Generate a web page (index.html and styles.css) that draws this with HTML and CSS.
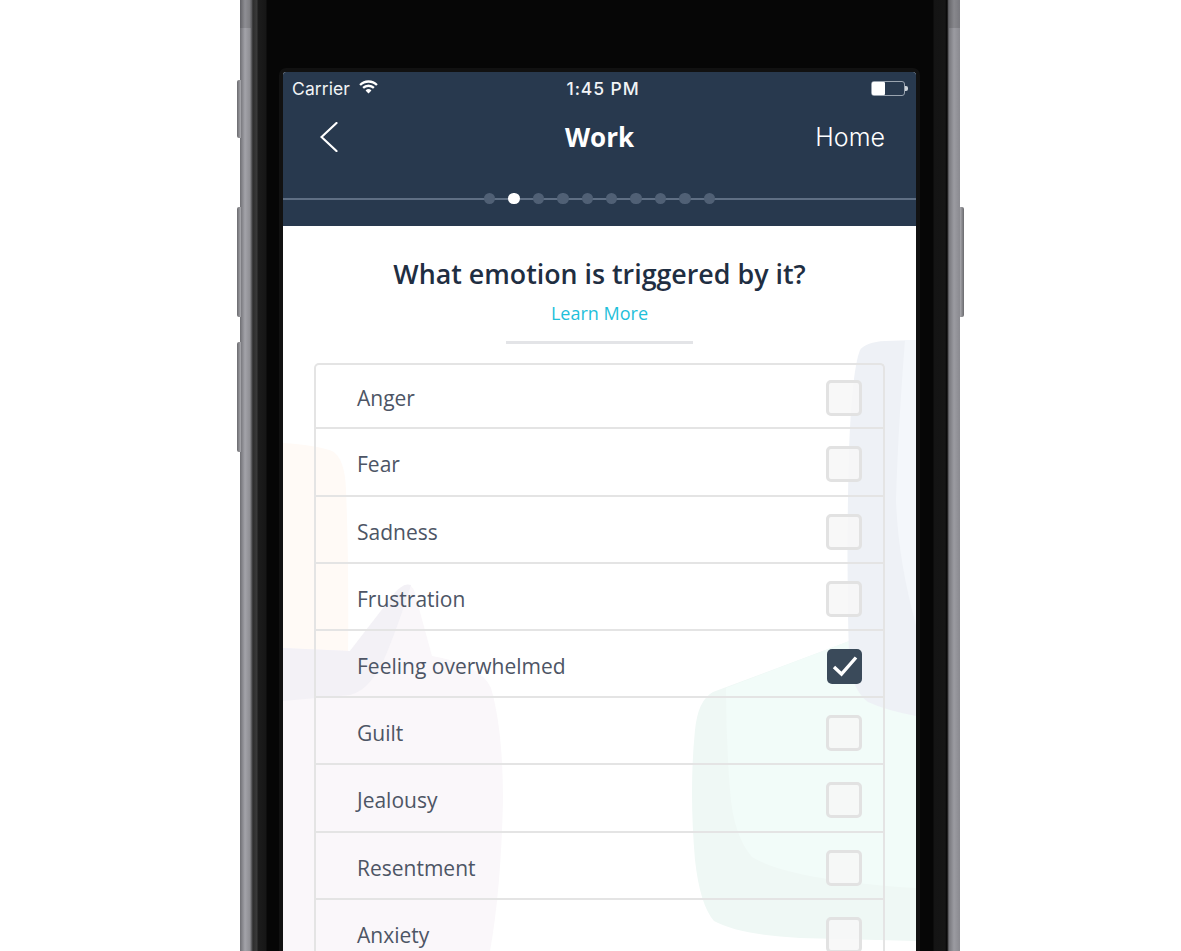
FILE: index.html
```html
<!DOCTYPE html>
<html lang="en">
<head>
    <meta charset="UTF-8">
    <meta name="viewport" content="width=device-width, initial-scale=1.0">
    <title>Work</title>
    <link rel="stylesheet" href="styles.css">
</head>
<body>
    <div class="stage">
        <div class="phone">
            <span class="side-btn mute"></span>
            <span class="side-btn vol-up"></span>
            <span class="side-btn vol-down"></span>
            <span class="side-btn power"></span>

            <div class="phone-body">
                <div class="screen">
                    <header class="header">
                        <div class="status-bar">
                            <div class="status-left">
                                <span>Carrier</span>
                                <svg class="wifi" viewBox="0 0 18 13" width="19" height="14">
                                    <path d="M1 4.6a11.4 11.4 0 0 1 16 0" />
                                    <path d="M3.9 7.4a7.3 7.3 0 0 1 10.2 0" />
                                    <path class="wifi-dot" d="M6.2 9.8a4 4 0 0 1 5.6 0L9 12.6z" />
                                </svg>
                            </div>
                            <span class="status-time">1:45 PM</span>
                            <div class="status-right">
                                <div class="battery"><div class="battery-level"></div></div>
                                <span class="battery-tip"></span>
                            </div>
                        </div>

                        <div class="nav">
                            <svg class="back" viewBox="0 0 18 30" width="18" height="30">
                                <path d="M16.5 1 L1.5 15 L16.5 29" />
                            </svg>
                            <h1 class="nav-title">Work</h1>
                            <span class="nav-home">Home</span>
                        </div>

                        <div class="progress">
                            <span class="dot"></span>
                            <span class="dot active"></span>
                            <span class="dot"></span>
                            <span class="dot"></span>
                            <span class="dot"></span>
                            <span class="dot"></span>
                            <span class="dot"></span>
                            <span class="dot"></span>
                            <span class="dot"></span>
                            <span class="dot"></span>
                        </div>
                    </header>

                    <main class="content">
                        <svg class="blobs" viewBox="283 226 633 725" width="633" height="725">
                            <path fill="#fffaf6" d="M283 443 Q315 445 332 451 Q345 458 346 490 Q349 560 348 660 L283 660 Z" />
                            <path fill="#faf7fa" d="M283 648 L350 651 L394 594 Q407 578 414 590 L432 656 Q480 664 491 688 Q503 730 503 800 Q501 890 490 951 L283 951 Z" />
                            <path fill="#f3f1f6" d="M283 648 L350 651 L394 594 Q404 582 411 585 Q400 620 388 650 Q372 690 350 695 L283 701 Z" />
                            <path fill="#eff8f5" d="M916 610 L852 640 L713 692 Q698 700 695 730 Q689 790 695 860 Q700 905 714 921 Q740 935 800 938 L916 941 Z" />
                            <path fill="#f2fcf9" d="M916 610 L852 640 L726 688 Q726 740 730 790 Q733 835 752 857 Q790 880 916 888 Z" />
                            <path fill="#eef1f6" d="M916 340 L885 341 Q866 342 860 350 Q852 370 849 450 Q846 560 849 660 Q852 690 868 702 Q885 710 916 716 Z" />
                            <path fill="#f4f7fb" d="M916 340 L905 340 Q898 430 896 500 Q898 560 916 625 Z" />
                        </svg>

                        <div class="question">
                            <h2 class="question-title">What emotion is triggered by it?</h2>
                            <a class="learn-more">Learn More</a>
                            <div class="rule"></div>
                        </div>

                        <ul class="list">
                            <li class="row"><span>Anger</span><span class="box"></span></li>
                            <li class="row"><span>Fear</span><span class="box"></span></li>
                            <li class="row"><span>Sadness</span><span class="box"></span></li>
                            <li class="row"><span>Frustration</span><span class="box"></span></li>
                            <li class="row">
                                <span>Feeling overwhelmed</span>
                                <span class="box checked">
                                    <svg viewBox="0 0 26 22" width="26" height="22">
                                        <path d="M2 12 L9.5 19 L24 2.5" />
                                    </svg>
                                </span>
                            </li>
                            <li class="row"><span>Guilt</span><span class="box"></span></li>
                            <li class="row"><span>Jealousy</span><span class="box"></span></li>
                            <li class="row"><span>Resentment</span><span class="box"></span></li>
                            <li class="row"><span>Anxiety</span><span class="box"></span></li>
                        </ul>
                    </main>
                </div>
            </div>
        </div>
    </div>
</body>
</html>
```

FILE: styles.css
```css
* {
    margin: 0;
    padding: 0;
    box-sizing: border-box;
}

body {
    background-color: #fff;
    font-family: "Open Sans", Lato, sans-serif;
    overflow: hidden;
}

.stage {
    height: 100vh;
    padding-left: 240px;
    overflow: hidden;
}

.phone {
    position: relative;
    width: 720px;
    height: 951px;
}

/* antenna bands at the top of the metal edge */
.phone::before,
.phone::after {
    content: "";
    position: absolute;
    top: 0;
    width: 11px;
    height: 28px;
    background-color: rgba(0, 0, 0, 0.12);
}

.phone::before { left: 0; }
.phone::after { right: 0; }

.phone-body {
    height: 100%;
    padding: 68px 44px 0 43px;
    background: linear-gradient(90deg,
        #6f6f74 0, #a3a3a9 5px, #8e8e93 10px, #4c4c4e 12px,
        #2e2e2e 13px, #3a3a3a 17px, #1c1c1c 18px, #161616 26px,
        #060606 27px, #060606 693px,
        #141414 694px, #161616 705px, #050505 707px,
        #77777c 709px, #9b9ba1 714px, #8a8a90 720px);
}

.screen {
    height: 100%;
    border: 4px solid #111;
    border-bottom: 0;
    border-radius: 7px 7px 0 0;
    background-color: #fff;
    display: flex;
    flex-direction: column;
    overflow: hidden;
    margin: 0 -4px;
}

.side-btn {
    position: absolute;
    width: 4px;
    background: linear-gradient(90deg, #6a6a6e, #a9a9ae);
    border-radius: 2px 0 0 2px;
}

.mute { left: -3px; top: 80px; height: 58px; }
.vol-up { left: -3px; top: 207px; height: 110px; }
.vol-down { left: -3px; top: 342px; height: 110px; }

.power {
    left: 720px;
    top: 207px;
    height: 110px;
    border-radius: 0 2px 2px 0;
    background: linear-gradient(90deg, #a9a9ae, #6a6a6e);
}

.header {
    height: 154px;
    flex-shrink: 0;
    background-color: #28394e;
    color: #fff;
    display: flex;
    flex-direction: column;
}

.status-bar {
    display: flex;
    justify-content: space-between;
    align-items: center;
    height: 33px;
    padding: 0 8px 0 9px;
    font-family: Inter, sans-serif;
    font-size: 17.5px;
    color: #f2f4f6;
}

.status-left {
    display: flex;
    align-items: center;
    gap: 9px;
    width: 200px;
    letter-spacing: 0.1px;
}

.status-time {
    font-weight: 500;
    margin-left: 6px;
    letter-spacing: 0.9px;
}

.wifi {
    margin-top: -3px;
}

.wifi path {
    fill: none;
    stroke: #fff;
    stroke-width: 2.2;
}

.wifi .wifi-dot {
    fill: #fff;
    stroke: none;
}

.status-right {
    display: flex;
    justify-content: flex-end;
    align-items: center;
    width: 200px;
}

.battery {
    width: 34px;
    height: 15px;
    border: 1px solid #9aa4b0;
    border-radius: 3px;
}

.battery-level {
    width: 13px;
    height: 100%;
    background-color: #fff;
    border-radius: 1px;
}

.battery-tip {
    width: 3px;
    height: 5px;
    background-color: #cfd5db;
    border-radius: 0 2px 2px 0;
}

.nav {
    display: grid;
    grid-template-columns: 1fr auto 1fr;
    align-items: center;
    height: 64px;
    padding: 0 31px;
}

.back {
    margin-left: 6px;
}

.back path {
    fill: none;
    stroke: #fff;
    stroke-width: 2.2;
    stroke-linecap: round;
}

.nav-title {
    font-size: 26px;
    font-weight: 700;
}

.nav-home {
    justify-self: end;
    font-family: Inter, sans-serif;
    font-size: 25px;
    font-weight: 300;
}

.progress {
    display: flex;
    justify-content: center;
    gap: 13px;
    margin-top: 24px;
    background: linear-gradient(#5f6f84, #5f6f84) center / 100% 2px no-repeat;
    height: 12px;
}

.dot {
    width: 11.4px;
    height: 11.4px;
    border-radius: 50%;
    background-color: #506075;
}

.dot.active {
    background-color: #fff;
}

.content {
    position: relative;
    flex: 1;
    padding: 0 31px;
    overflow: hidden;
}

.blobs {
    position: absolute;
    left: 0;
    top: 0;
}

.question,
.list {
    position: relative;
}

.question {
    display: flex;
    flex-direction: column;
    align-items: center;
    padding-top: 30px;
}

.question-title {
    font-size: 26.8px;
    font-weight: 600;
    line-height: 36px;
    color: #1f2e42;
}

.learn-more {
    margin-top: 9px;
    font-size: 18px;
    line-height: 24px;
    color: #1fc0da;
}

.rule {
    width: 187px;
    height: 3px;
    margin-top: 16px;
    background-color: #e3e4e7;
}

.list {
    list-style: none;
    margin-top: 19px;
    border: 2px solid #e4e4e4;
    border-bottom: 0;
    border-radius: 5px 5px 0 0;
}

.row {
    display: flex;
    justify-content: space-between;
    align-items: center;
    height: 67.2px;
    padding: 5px 21px 0 41px;
    border-bottom: 2px solid #e4e4e4;
    font-size: 21px;
    color: #4d5565;
}

.row:first-child {
    height: 64.4px;
    padding-top: 4px;
}

.box {
    display: flex;
    align-items: center;
    justify-content: center;
    width: 36px;
    height: 36px;
    border: 3px solid #e2e2e2;
    border-radius: 5px;
    background-color: rgba(247, 247, 247, 0.85);
}

.box.checked {
    width: 35px;
    height: 35px;
    border: 0;
    background-color: #3a4a5a;
}

.box svg path {
    fill: none;
    stroke: #fff;
    stroke-width: 3.4;
}
```
